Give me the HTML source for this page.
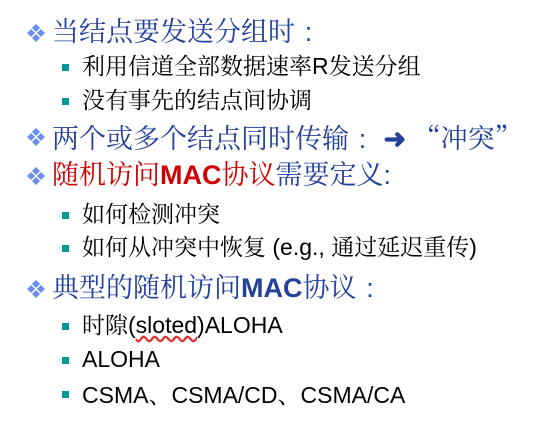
<html><head><style>
body{margin:0;width:549px;height:427px;background:#fff;position:relative;overflow:hidden;font-family:"Liberation Sans","Noto Serif CJK SC",serif}
.l{position:absolute;white-space:nowrap;line-height:1}
.a{left:52px;font-size:27px;color:#23409a}
.b{left:82px;font-size:23px;color:#000}
.d{position:absolute;left:26px;width:20px;height:20px}
.s{position:absolute;left:62px;width:7px;height:7px;background:#009999}
.r{color:#d00000}
.m{font-weight:bold}
.c{display:inline-block;width:1em;text-align:center}
.q{font-family:"Noto Serif CJK SC",serif}
</style></head><body>
<svg width="0" height="0" style="position:absolute"><defs><g id="dm" fill="#6a8ff0"><path d="M10 1l4 4-4 4-4-4z"/><path d="M10 11l4 4-4 4-4-4z"/><path d="M5 6l4 4-4 4-4-4z"/><path d="M15 6l4 4-4 4-4-4z"/></g></defs></svg>
<svg class="d" style="top:23px" viewBox="0 0 20 20"><use href="#dm"/></svg>
<div class="l a" style="top:19px">当结点要发送分组时<span class="c">:</span></div>
<div class="s" style="top:64px"></div><div class="l b" style="top:55px">利用信道全部数据速率R发送分组</div>
<div class="s" style="top:98px"></div><div class="l b" style="top:89px">没有事先的结点间协调</div>
<svg class="d" style="top:127px" viewBox="0 0 20 20"><use href="#dm"/></svg>
<div class="l a" style="top:123px">两个或多个结点同时传输<span class="c">:</span> <b>➜</b> <span class="q">“冲突”</span></div>
<svg class="d" style="top:166px" viewBox="0 0 20 20"><use href="#dm"/></svg>
<div class="l a" style="top:162px"><span class="r">随机访问<span class="m">MAC</span>协议</span>需要定义:</div>
<div class="s" style="top:212px"></div><div class="l b" style="top:203px">如何检测冲突</div>
<div class="s" style="top:245px"></div><div class="l b" style="top:236px">如何从冲突中恢复 (e.g., 通过延迟重传)</div>
<svg class="d" style="top:279px" viewBox="0 0 20 20"><use href="#dm"/></svg>
<div class="l a" style="top:275px">典型的随机访问<span class="m">MAC</span>协议<span class="c">:</span></div>
<div class="s" style="top:323px"></div><div class="l b" style="top:314px">时隙(<span style="text-decoration:underline wavy #e03030">sloted</span>)ALOHA</div>
<div class="s" style="top:357px"></div><div class="l b" style="top:348px">ALOHA</div>
<div class="s" style="top:391px"></div><div class="l b" style="top:382px">CSMA<span class="q">、</span>CSMA/CD<span class="q">、</span>CSMA/CA</div>
</body></html>
